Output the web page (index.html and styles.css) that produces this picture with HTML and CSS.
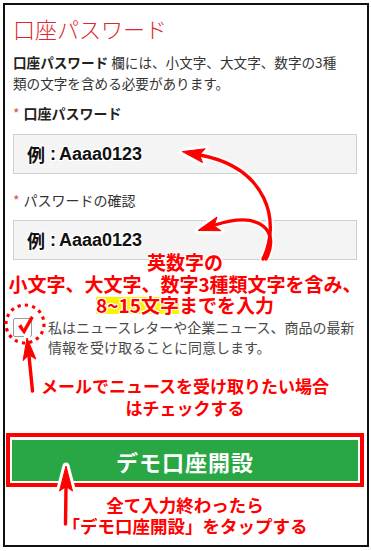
FILE: index.html
```html
<!DOCTYPE html>
<html lang="ja">
<head>
<meta charset="utf-8">
<title>口座パスワード</title>
<link rel="stylesheet" href="styles.css">
</head>
<body>
<div class="frame">
  <h1 class="title">口座パスワード</h1>
  <p class="desc"><b>口座パスワード</b> 欄には、小文字、大文字、数字の3種<br>類の文字を含める必要があります。</p>
  <div class="label label-bold"><span class="req">*</span>口座パスワード</div>
  <div class="input input-first"><span class="ex">例</span><span class="colon">:</span>Aaaa0123</div>
  <div class="label label-second"><span class="req">*</span>パスワードの確認</div>
  <div class="input input-second"><span class="ex">例</span><span class="colon">:</span>Aaaa0123</div>
  <div class="callout callout-rules">英数字の<br>小文字、大文字、数字3種類文字を含み、<br><span class="mark">8~15文字</span>までを入力</div>
  <div class="check-row">
    <span class="box"></span>
    <span class="check-text">私はニュースレターや企業ニュース、商品の最新情報を受け取ることに同意します。</span>
  </div>
  <div class="callout callout-mail">メールでニュースを受け取りたい場合<br>はチェックする</div>
  <div class="btn-wrap"><div class="btn">デモ口座開設</div></div>
  <div class="callout callout-tap">全て入力終わったら<br>「デモ口座開設」をタップする</div>
</div>
<svg class="overlay" width="371" height="551" viewBox="0 0 371 551" xmlns="http://www.w3.org/2000/svg">
  <g fill="none" stroke="#fff" stroke-width="7" stroke-linecap="round" stroke-linejoin="round">
    <path d="M263,259 C281,222 268,168 200,155"/>
    <path d="M266,259 C280,232 262,210 215,225"/>
    <path d="M28.9,355 L32.5,391"/>
    <path d="M66,487 L65.5,524"/>
    <polygon points="182.3,151.6 205.2,148.8 199.5,155 202.6,162.6"/>
    <polygon points="198,230.5 217,217 214,226 221,230.7"/>
    <polygon points="27,338 35.9,359.1 28.9,354.9 23.1,360.5"/>
    <polygon points="66,466 72.5,491 66,486.5 59.5,491"/>
  </g>
  <g fill="none" stroke="#f00" stroke-width="3.4" stroke-linecap="round">
    <path d="M263,259 C281,222 268,168 200,155"/>
    <path d="M266,259 C280,232 262,210 215,225"/>
    <path d="M28.9,355 L32.5,391"/>
    <path d="M66,487 L65.5,524"/>
  </g>
  <g fill="#f00" stroke="#f00" stroke-width="1" stroke-linejoin="round">
    <polygon points="182.3,151.6 205.2,148.8 199.5,155 202.6,162.6"/>
    <polygon points="198,230.5 217,217 214,226 221,230.7"/>
    <polygon points="27,338 35.9,359.1 28.9,354.9 23.1,360.5"/>
    <polygon points="66,466 72.5,491 66,486.5 59.5,491"/>
  </g>
  <circle cx="25" cy="324" r="19" fill="none" stroke="#f00" stroke-width="3.2" stroke-dasharray="3.2 4.2"/>
  <polygon points="18.5,326.5 21.2,324.6 23.6,329.2 31,316.2 33.4,317.8 24.2,334" fill="#f00" stroke="#f00" stroke-width="0.6" stroke-linejoin="round"/>
</svg>
</body>
</html>
```
FILE: styles.css
```css
* { box-sizing: border-box; }
html, body { margin: 0; padding: 0; background: #fff; }
body {
  position: relative;
  width: 371px;
  height: 551px;
  overflow: hidden;
  font-family: "Noto Sans CJK JP", "Noto Sans", sans-serif;
  color: #333;
}
.frame {
  margin: 3px 0 0 3px;
  width: 366px;
  height: 544px;
  border: 2px solid #111;
  padding: 9px 10px 0 8px;
}
.title {
  margin: 0;
  font-size: 22px;
  line-height: 28px;
  font-weight: 300;
  color: #e0262d;
}
.desc {
  margin: 10px 0 0;
  font-size: 13.6px;
  line-height: 21px;
  color: #333;
}
.desc b { color: #222; font-weight: 700; }
.label {
  font-size: 14px;
  line-height: 20px;
  color: #333;
}
.label-bold { margin-top: 9px; font-weight: 700; color: #222; }
.label-second { margin-top: 16px; }
.req {
  color: #d9534f;
  font-weight: 400;
  margin-right: 4px;
}
.input {
  display: flex;
  align-items: center;
  height: 40px;
  margin-top: 11px;
  padding-left: 13px;
  background: #f4f4f4;
  border: 1px solid #cfcfcf;
  font-family: "Liberation Sans", "Noto Sans CJK JP", sans-serif;
  font-size: 18px;
  font-weight: 700;
  color: #111;
  text-shadow: 0 0 2px #fff, 1px 1px 0 #fff, -1px -1px 0 #fff, 1px -1px 0 #fff, -1px 1px 0 #fff;
}
.input-second { margin-top: 10px; }
.ex { font-family: "Noto Sans CJK JP", sans-serif; }
.colon { margin: 0 3px 0 5px; }
.callout {
  text-align: center;
  color: #f00;
  font-weight: 700;
  text-shadow: 0 0 2px #fff, 1px 1px 0 #fff, -1px -1px 0 #fff, 1px -1px 0 #fff, -1px 1px 0 #fff;
}
.callout-rules {
  position: relative;
  margin: -9px -8px 0;
  font-size: 19px;
  line-height: 21.5px;
}
.mark {
  background: linear-gradient(#fff200, #fff200) no-repeat;
  background-size: 100% 17px;
  background-position: 0 55%;
}
.check-row {
  display: flex;
  gap: 16px;
  margin-top: 1.5px;
  font-size: 14px;
  line-height: 20px;
  color: #4a4a4a;
}
.box {
  flex: none;
  width: 19px;
  height: 19px;
  margin-top: 1px;
  border: 1px solid #9a9a9a;
  border-radius: 2px;
  background: #fff;
}
.check-text { margin-right: -6px; }
.callout-mail {
  margin-top: 17.5px;
  font-size: 17px;
  line-height: 22px;
}
.btn-wrap {
  margin: 14.5px -7px 0;
  border: 4px solid #f00;
  padding: 3px 2px 2px;
  background: #fff;
}
.btn {
  display: flex;
  align-items: center;
  justify-content: center;
  height: 41px;
  background: #29a744;
  color: #fff;
  font-size: 22px;
  font-weight: 700;
  letter-spacing: 1px;
}
.callout-tap {
  margin-top: 7px;
  font-size: 17.5px;
  line-height: 21px;
}
.overlay {
  position: absolute;
  left: 0;
  top: 0;
  pointer-events: none;
}
```
